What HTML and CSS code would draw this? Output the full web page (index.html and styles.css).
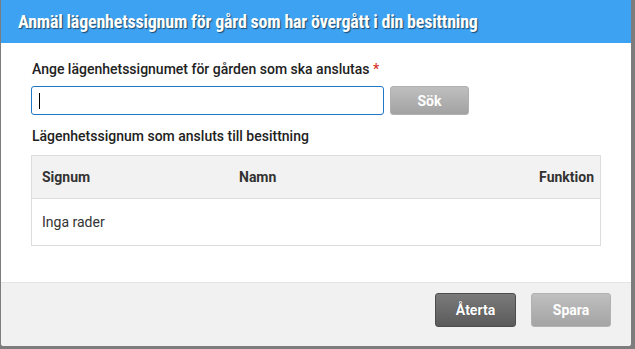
FILE: index.html
```html
<!DOCTYPE html>
<html lang="sv">
<head>
<meta charset="utf-8">
<link rel="stylesheet" href="styles.css">
</head>
<body>
<div class="backdrop">
  <div class="modal">
    <div class="modal-header">
      <h1 class="title">Anmäl lägenhetssignum för gård som har övergått i din besittning</h1>
    </div>
    <div class="modal-body">
      <label class="field-label">Ange lägenhetssignumet för gården som ska anslutas <span class="req">*</span></label>
      <div class="search-row">
        <div class="input"><span class="caret"></span></div>
        <button class="btn btn-search">Sök</button>
      </div>
      <div class="section-title">Lägenhetssignum som ansluts till besittning</div>
      <div class="table">
        <div class="thead">
          <div class="th th-signum">Signum</div>
          <div class="th th-namn">Namn</div>
          <div class="th th-funktion">Funktion</div>
        </div>
        <div class="tbody">
          <div class="empty">Inga rader</div>
        </div>
      </div>
    </div>
    <div class="modal-footer">
      <button class="btn btn-dark">Återta</button>
      <button class="btn btn-light">Spara</button>
    </div>
  </div>
</div>
</body>
</html>
```

FILE: styles.css
```css
html, body {
  margin: 0;
  padding: 0;
}
body {
  width: 635px;
  height: 349px;
  overflow: hidden;
  background: #7d7d7d;
  font-family: Roboto, "Liberation Sans", sans-serif;
  color: #222;
}
.backdrop {
  padding-left: 1px;
}
.modal {
  width: 630px;
  height: 346px;
  background: #fff;
  display: flex;
  flex-direction: column;
  border-bottom-left-radius: 3px;
  border-bottom-right-radius: 3px;
  overflow: hidden;
}
.modal-header {
  background: #3ea2f2;
  height: 43px;
  display: flex;
  align-items: center;
  padding-left: 17px;
  flex: none;
}
.title {
  margin: 0;
  font-size: 18px;
  font-weight: 700;
  font-stretch: 75%;
  letter-spacing: -0.2px;
  color: #fff;
  text-shadow: 1px 1px 1px rgba(0,0,0,0.55);
}
.modal-body {
  flex: 1;
  padding: 17px 30px 0 30px;
}
.field-label {
  display: block;
  font-size: 14px;
  font-weight: 500;
  line-height: 18px;
  margin-left: 1px;
}
.req {
  color: #d9342b;
}
.search-row {
  display: flex;
  gap: 6px;
  margin-top: 8px;
}
.input {
  width: 344px;
  height: 27px;
  border: 1px solid #1f77c8;
  border-radius: 3px;
  display: flex;
  align-items: center;
  padding-left: 7px;
  box-sizing: content-box;
}
.caret {
  width: 1px;
  height: 16px;
  background: #000;
}
.btn {
  font-family: Roboto, "Liberation Sans", sans-serif;
  font-weight: 700;
  font-size: 14px;
  color: #fff;
  border-radius: 3px;
  padding: 0;
  cursor: pointer;
}
.btn-search {
  width: 79px;
  height: 29px;
  border: 1px solid #b0b0b0;
  background: linear-gradient(#bfbfbf, #a2a2a2);
}
.section-title {
  font-size: 14px;
  font-weight: 500;
  line-height: 18px;
  margin-top: 12px;
  margin-left: 1px;
}
.table {
  margin-top: 10px;
  width: 568px;
  border: 1px solid #dddddd;
}
.thead {
  display: grid;
  grid-template-columns: 197px 1fr auto;
  height: 42px;
  align-items: center;
  background: #f2f2f2;
  border-bottom: 1px solid #dddddd;
  padding: 0 6px 0 10px;
}
.th {
  font-size: 14px;
  font-weight: 700;
  color: #333;
}
.tbody {
  height: 46px;
  display: flex;
  align-items: center;
  padding-left: 10px;
}
.empty {
  font-size: 14px;
  color: #333;
}
.modal-footer {
  flex: none;
  height: 64px;
  background: #f1f1f1;
  border-top: 1px solid #e4e4e4;
  display: flex;
  justify-content: flex-end;
  align-items: flex-start;
  gap: 15px;
  padding: 10px 20px 0 0;
  box-sizing: border-box;
}
.btn-dark {
  width: 81px;
  height: 34px;
  border: 1px solid #4d4d4d;
  background: linear-gradient(#7a7a7a, #5b5b5b);
  text-shadow: 0 0 1px rgba(0,0,0,0.4);
}
.btn-light {
  width: 80px;
  height: 34px;
  border: 1px solid #b2b2b2;
  background: linear-gradient(#bfbfbf, #a4a4a4);
}
```
